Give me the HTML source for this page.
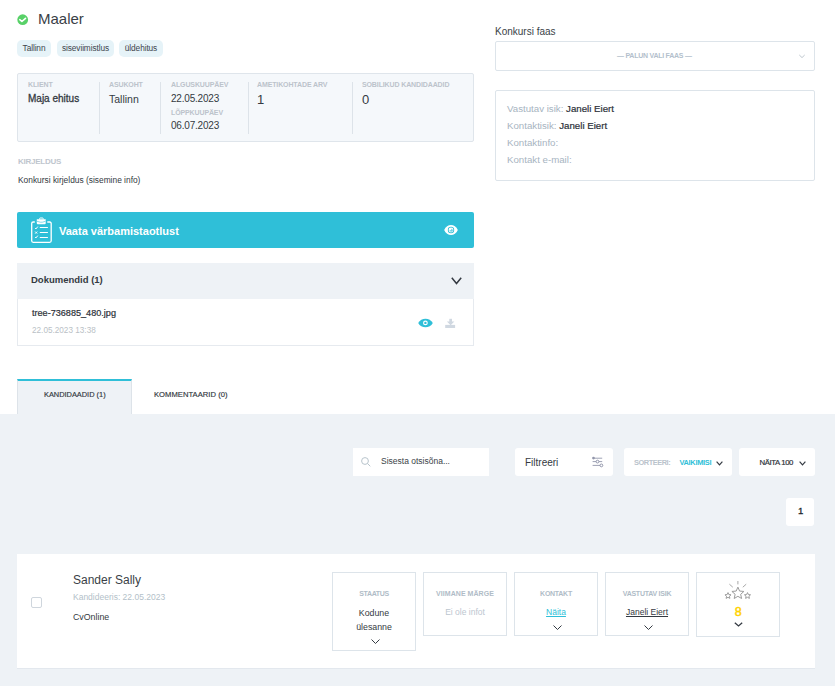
<!DOCTYPE html>
<html><head><meta charset="utf-8">
<style>
*{box-sizing:border-box;margin:0;padding:0}
html,body{width:835px;height:686px;overflow:hidden;background:#fff;font-family:"Liberation Sans",sans-serif;color:#343a42}
.a{position:absolute}
.t{position:absolute;white-space:nowrap;line-height:1}
.tag{position:absolute;top:40px;height:17px;background:#e6f3f8;border-radius:5px;font-size:8.3px;letter-spacing:-0.1px;color:#40454d;line-height:16.5px;text-align:center}
.info{left:17px;top:73px;width:457px;height:69px;background:#f5f8fb;border:1px solid #dfe5eb;border-radius:2px}
.div{position:absolute;top:8px;width:1px;height:52px;background:#dde3e9}
.lbl{position:absolute;font-size:7px;font-weight:bold;letter-spacing:-0.12px;color:#bcc3cb;white-space:nowrap;line-height:1}
.val{position:absolute;font-size:10px;color:#343a42;white-space:nowrap;line-height:1}
.gray{left:0;top:414px;width:835px;height:272px;background:#eef2f6}
.wbox{position:absolute;background:#fff;border-radius:3px}
.sbox{position:absolute;top:572px;width:84px;border:1px solid #dde4ea;text-align:center}
.sl{position:absolute;left:0;right:0;top:17px;font-size:7px;font-weight:bold;color:#b0bcc7;line-height:1;text-align:center}
</style></head><body>

<!-- header -->
<svg class="a" style="left:17px;top:14px" width="12" height="12" viewBox="0 0 12 12"><circle cx="5.7" cy="5.7" r="5.4" fill="#58d168"/><path d="M2.8 5.7 L4.9 7.5 L8.5 4.3" stroke="#fff" stroke-width="1.6" fill="none" stroke-linecap="round" stroke-linejoin="round"/></svg>
<div class="t" style="left:38px;top:11px;font-size:15px;color:#3a3f47">Maaler</div>

<div class="tag" style="left:17px;width:34px">Tallinn</div>
<div class="tag" style="left:57px;width:57px">siseviimistlus</div>
<div class="tag" style="left:119px;width:44px">üldehitus</div>

<div class="a info">
  <div class="div" style="left:81px"></div>
  <div class="div" style="left:142px"></div>
  <div class="div" style="left:229.5px"></div>
  <div class="div" style="left:333.5px"></div>
  <div class="lbl" style="left:10px;top:7px">KLIENT</div>
  <div class="val" style="left:10px;top:19.5px;font-size:10px;-webkit-text-stroke:0.3px #343a42">Maja ehitus</div>
  <div class="lbl" style="left:91px;top:7px">ASUKOHT</div>
  <div class="val" style="left:91px;top:19.5px;font-size:10.5px">Tallinn</div>
  <div class="lbl" style="left:153px;top:7px">ALGUSKUUPÄEV</div>
  <div class="val" style="left:153px;top:20px;letter-spacing:-0.2px">22.05.2023</div>
  <div class="lbl" style="left:153px;top:35px">LÕPPKUUPÄEV</div>
  <div class="val" style="left:153px;top:46.5px;letter-spacing:-0.2px">06.07.2023</div>
  <div class="lbl" style="left:239px;top:7px">AMETIKOHTADE ARV</div>
  <div class="val" style="left:239px;top:18.5px;font-size:13px">1</div>
  <div class="lbl" style="left:344px;top:7px">SOBILIKUD KANDIDAADID</div>
  <div class="val" style="left:344px;top:18.5px;font-size:13px">0</div>
</div>

<div class="t" style="left:18px;top:158px;font-size:8px;font-weight:bold;letter-spacing:-0.25px;color:#bfc6ce">KIRJELDUS</div>
<div class="t" style="left:18px;top:176px;font-size:8.4px;color:#343a42">Konkursi kirjeldus (sisemine info)</div>

<!-- teal button -->
<div class="a" style="left:17px;top:212px;width:457px;height:36px;background:#2fbfd8;border-radius:2px"></div>
<svg class="a" style="left:28px;top:215px" width="28" height="30" viewBox="0 0 28 30">
  <path d="M6.8 7 H5.2 Q3.7 7 3.7 8.5 V25.8 Q3.7 27.3 5.2 27.3 H21.7 Q23.2 27.3 23.2 25.8 V8.5 Q23.2 7 21.7 7 H19.3" stroke="#fff" stroke-width="1.3" fill="none"/>
  <path d="M8.8 4.3 H17.7 V8.3 Q17.7 9.2 16.8 9.2 H9.7 Q8.8 9.2 8.8 8.3Z" fill="#fff"/>
  <path d="M11.6 4.5 V3.6 Q11.6 3 12.2 3 H14.6 Q15.2 3 15.2 3.6 V4.5" stroke="#fff" stroke-width="1" fill="none"/>
  <path d="M9 6.3 L12.3 7.2 H14.3 L17.5 6.3" stroke="#2fbfd8" stroke-width="0.6" fill="none"/>
  <path d="M11.8 12.5 H19.9 M11.8 17.5 H19.9 M11.8 22.5 H19.9" stroke="#fff" stroke-width="1.2"/>
  <path d="M7.1 13.2 L8 13.9 L9.8 11.6 M7.2 16.6 L9.2 18.6 M9.2 16.6 L7.2 18.6 M7.1 22.2 L8 22.9 L9.8 20.6" stroke="#fff" stroke-width="1" fill="none"/>
</svg>
<div class="t" style="left:59px;top:226px;font-size:11px;font-weight:bold;color:#fff">Vaata värbamistaotlust</div>
<svg class="a" style="left:444px;top:225px" width="14" height="10" viewBox="0 0 14 10"><path d="M0.2 5 C3 -1.6, 11 -1.6, 13.8 5 C11 11.6, 3 11.6, 0.2 5Z" fill="#fff"/><circle cx="7" cy="5" r="3.2" fill="#2fbfd8"/><circle cx="7" cy="5" r="2.4" fill="#fff"/><circle cx="7.3" cy="5.3" r="1.5" fill="#6fd3e5"/><circle cx="6.5" cy="4.5" r="0.8" fill="#fff"/></svg>

<!-- documents -->
<div class="a" style="left:17px;top:263px;width:457px;height:36px;background:#eef2f6"></div>
<div class="t" style="left:31px;top:275px;font-size:9.5px;font-weight:bold;color:#343a42">Dokumendid (1)</div>
<svg class="a" style="left:451px;top:277px" width="11" height="8" viewBox="0 0 11 8"><path d="M0.8 0.8 L5.5 6.5 L10.2 0.8" stroke="#343a42" stroke-width="1.5" fill="none"/></svg>
<div class="a" style="left:17px;top:299px;width:457px;height:47px;border:1px solid #e6eaef;border-top:none"></div>
<div class="t" style="left:32px;top:308.5px;font-size:9.1px;color:#2c3138;-webkit-text-stroke:0.2px #2c3138">tree-736885_480.jpg</div>
<div class="t" style="left:32px;top:326.5px;font-size:8.2px;color:#babfc6">22.05.2023 13:38</div>
<svg class="a" style="left:418px;top:318px" width="15" height="10" viewBox="0 0 15 10"><path d="M0.2 5 C3.2 -0.8, 11.8 -0.8, 14.8 5 C11.8 10.8, 3.2 10.8, 0.2 5Z" fill="#2fbfd8"/><circle cx="7.4" cy="4.9" r="2.4" fill="#fff"/><circle cx="7.4" cy="4.9" r="1.2" fill="#2fbfd8"/></svg>
<svg class="a" style="left:445px;top:318px" width="11" height="11" viewBox="0 0 11 11"><rect x="4.3" y="0.8" width="2.7" height="3.6" fill="#d0d8e1"/><path d="M1.9 3.6 H9.4 L5.65 7.2Z" fill="#d0d8e1"/><rect x="0.2" y="6.9" width="9.9" height="3.1" fill="#d0d8e1"/></svg>

<!-- right column -->
<div class="t" style="left:495px;top:27px;font-size:10px;color:#3a3f47">Konkursi faas</div>
<div class="a" style="left:495px;top:41px;width:320px;height:30px;border:1px solid #dde4ea;border-radius:2px"></div>
<div class="t" style="left:617px;top:51.5px;font-size:7px;font-weight:bold;letter-spacing:-0.25px;color:#b3c0cc">— PALUN VALI FAAS —</div>
<svg class="a" style="left:798px;top:54px" width="8" height="5" viewBox="0 0 8 5"><path d="M1.3 1 L4 3.6 L6.7 1" stroke="#b5bfc8" stroke-width="0.9" fill="none"/></svg>

<div class="a" style="left:495px;top:90px;width:320px;height:91px;border:1px solid #dde4ea;border-radius:2px"></div>
<div class="t" style="left:507px;top:104px;font-size:9.7px;color:#a7b4bf">Vastutav isik: <span style="color:#2b3038;-webkit-text-stroke:0.2px #2b3038">Janeli Eiert</span></div>
<div class="t" style="left:507px;top:121px;font-size:9.7px;color:#a7b4bf">Kontaktisik: <span style="color:#2b3038;-webkit-text-stroke:0.2px #2b3038">Janeli Eiert</span></div>
<div class="t" style="left:507px;top:138px;font-size:9.7px;color:#a7b4bf">Kontaktinfo:</div>
<div class="t" style="left:507px;top:155px;font-size:9.7px;color:#a7b4bf">Kontakt e-mail:</div>

<!-- tabs -->
<div class="a gray"></div>
<div class="a" style="left:17px;top:379px;width:115px;height:35px;background:#eef2f6;border-top:2px solid #2fbfd8;border-left:1px solid #dde3e9;border-right:1px solid #dde3e9"></div>
<div class="t" style="left:44px;top:391px;font-size:7.4px;letter-spacing:0px;color:#30353c;-webkit-text-stroke:0.15px #30353c">KANDIDAADID (1)</div>
<div class="t" style="left:154px;top:391px;font-size:7.6px;letter-spacing:0.05px;color:#30353c;-webkit-text-stroke:0.15px #30353c">KOMMENTAARID (0)</div>

<!-- toolbar -->
<div class="wbox" style="left:353px;top:448px;width:136px;height:28px;border-radius:0"></div>
<svg class="a" style="left:361px;top:457px" width="10" height="10" viewBox="0 0 10 10"><circle cx="4" cy="4" r="3.4" stroke="#b8c4cc" stroke-width="1" fill="none"/><path d="M6.5 6.5 L9.3 9.3" stroke="#b8c4cc" stroke-width="1"/></svg>
<div class="t" style="left:381px;top:457px;font-size:8.5px;color:#3a3f47">Sisesta otsisõna...</div>

<div class="wbox" style="left:515px;top:448px;width:98px;height:28px"></div>
<div class="t" style="left:525px;top:458px;font-size:10px;color:#343a42">Filtreeri</div>
<svg class="a" style="left:588px;top:452px" width="20" height="20" viewBox="0 0 20 20"><path d="M4.6 6.2 H14.2 M4.6 9.6 H14.2 M4.6 13.4 H14.2" stroke="#9296ab" stroke-width="0.9"/><circle cx="5.5" cy="6.1" r="1.3" fill="#9296ab"/><circle cx="9.5" cy="9.6" r="1.4" fill="#fff" stroke="#9296ab" stroke-width="1"/><circle cx="13.4" cy="13.4" r="1.4" fill="#fff" stroke="#9296ab" stroke-width="1"/></svg>

<div class="wbox" style="left:624px;top:448px;width:108px;height:28px"></div>
<div class="t" style="left:634px;top:458.5px;font-size:7.4px;font-weight:bold;letter-spacing:-0.45px;color:#bac3cc">SORTEERI:</div>
<div class="t" style="left:679.5px;top:458.5px;font-size:7.4px;font-weight:bold;letter-spacing:-0.3px;color:#2fbfd8">VAIKIMISI</div>
<svg class="a" style="left:716px;top:461px" width="7" height="5" viewBox="0 0 7 5"><path d="M0.6 0.6 L3.5 3.8 L6.4 0.6" stroke="#343a42" stroke-width="1.2" fill="none"/></svg>

<div class="wbox" style="left:739px;top:448px;width:76px;height:28px"></div>
<div class="t" style="left:759.5px;top:458.5px;font-size:7.8px;letter-spacing:-0.4px;color:#2f343b;-webkit-text-stroke:0.2px #2f343b">NÄITA 100</div>
<svg class="a" style="left:799px;top:461px" width="7" height="5" viewBox="0 0 7 5"><path d="M0.6 0.6 L3.5 3.8 L6.4 0.6" stroke="#343a42" stroke-width="1.2" fill="none"/></svg>

<div class="wbox" style="left:786px;top:498px;width:28px;height:28px"></div>
<div class="t" style="left:798px;top:506px;font-size:9.6px;color:#22262c;-webkit-text-stroke:0.3px #22262c">1</div>

<!-- candidate card -->
<div class="a" style="left:17px;top:554px;width:797.5px;height:115px;background:#fff;border-bottom:1px solid #e3e8ee"></div>
<div class="a" style="left:31px;top:597px;width:11px;height:11px;border:1px solid #cfd6dd;border-radius:2px"></div>
<div class="t" style="left:73px;top:573.5px;font-size:12px;color:#3a3f47">Sander Sally</div>
<div class="t" style="left:73px;top:592.5px;font-size:8.5px;color:#b3bfc9">Kandideeris: 22.05.2023</div>
<div class="t" style="left:73px;top:612.5px;font-size:8.8px;color:#343a42">CvOnline</div>

<div class="sbox" style="left:332px;height:79px">
  <div class="sl" style="letter-spacing:-0.36px">STAATUS</div>
  <div class="t" style="left:0;right:0;top:35.5px;font-size:8.8px;color:#343a42;text-align:center">Kodune</div>
  <div class="t" style="left:0;right:0;top:50px;font-size:8.8px;color:#343a42;text-align:center">ülesanne</div>
  <svg class="a" style="left:38px;top:66px" width="9" height="5" viewBox="0 0 9 5"><path d="M0.5 0.5 L4.5 4.5 L8.5 0.5" stroke="#343a42" stroke-width="1" fill="none"/></svg>
</div>
<div class="sbox" style="left:423px;height:64px">
  <div class="sl" style="letter-spacing:0.05px">VIIMANE MÄRGE</div>
  <div class="t" style="left:0;right:0;top:35px;font-size:8.5px;color:#bcc6cf;text-align:center">Ei ole infot</div>
</div>
<div class="sbox" style="left:514px;height:64px">
  <div class="sl" style="letter-spacing:-0.27px">KONTAKT</div>
  <div class="t" style="left:0;right:0;top:35px;font-size:8.5px;color:#2fbfd8;text-align:center;text-decoration:underline">Näita</div>
  <svg class="a" style="left:38px;top:52px" width="9" height="5" viewBox="0 0 9 5"><path d="M0.5 0.5 L4.5 4.5 L8.5 0.5" stroke="#343a42" stroke-width="1" fill="none"/></svg>
</div>
<div class="sbox" style="left:605px;height:64px">
  <div class="sl" style="letter-spacing:-0.25px">VASTUTAV ISIK</div>
  <div class="t" style="left:0;right:0;top:35px;font-size:8.5px;color:#343a42;text-align:center;text-decoration:underline">Janeli Eiert</div>
  <svg class="a" style="left:38px;top:52px" width="9" height="5" viewBox="0 0 9 5"><path d="M0.5 0.5 L4.5 4.5 L8.5 0.5" stroke="#343a42" stroke-width="1" fill="none"/></svg>
</div>
<div class="sbox" style="left:696px;height:65px">
  
  <div class="t" style="left:0.5px;right:0;top:32.5px;font-size:12.5px;color:#ffd200;-webkit-text-stroke:0.5px #ffd200;text-align:center">8</div>
  <svg class="a" style="left:37px;top:49px" width="9" height="5" viewBox="0 0 9 5"><path d="M0.8 0.8 L4.5 3.9 L8.2 0.8" stroke="#343a42" stroke-width="1.3" fill="none"/></svg>
</div>

<svg class="a" style="left:715px;top:575px" width="45" height="30" viewBox="0 0 45 30">
  <path d="M22.9 6 V9.4 M14.4 9.2 L17.8 12.2 M31.2 9.2 L27.8 12.2" stroke="#a8a8a8" stroke-width="1"/>
  <path d="M22.90 12.10 L24.60 16.05 L28.89 16.45 L25.66 19.30 L26.60 23.50 L22.90 21.30 L19.20 23.50 L20.14 19.30 L16.91 16.45 L21.20 16.05Z" stroke="#9c9c9c" stroke-width="1" fill="none" stroke-linejoin="round"/>
  <path d="M13.00 17.60 L13.88 19.59 L16.04 19.81 L14.43 21.26 L14.88 23.39 L13.00 22.30 L11.12 23.39 L11.57 21.26 L9.96 19.81 L12.12 19.59Z" stroke="#9c9c9c" stroke-width="1" fill="none" stroke-linejoin="round"/>
  <path d="M32.50 17.60 L33.38 19.59 L35.54 19.81 L33.93 21.26 L34.38 23.39 L32.50 22.30 L30.62 23.39 L31.07 21.26 L29.46 19.81 L31.62 19.59Z" stroke="#9c9c9c" stroke-width="1" fill="none" stroke-linejoin="round"/>
</svg>
</body></html>
